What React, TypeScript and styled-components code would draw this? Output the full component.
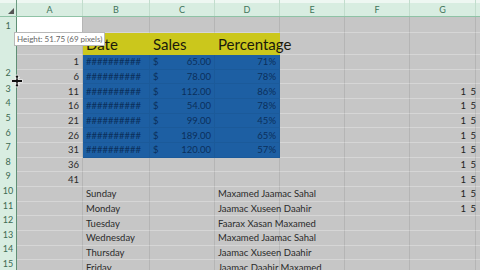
import styled, { createGlobalStyle } from "styled-components";

const GlobalStyle = createGlobalStyle`
  html, body {
    margin: 0;
    padding: 0;
    background: #c6c6c6;
    overflow: hidden;
  }
  body {
    font-family: Lato, "Liberation Sans", sans-serif;
  }
`;

const columns = [
  { key: "A", width: 66 },
  { key: "B", width: 67 },
  { key: "C", width: 65 },
  { key: "D", width: 65 },
  { key: "E", width: 65 },
  { key: "F", width: 65 },
  { key: "G", width: 66 },
  { key: "H", width: 40 },
];

type Fill = "gray" | "white" | "yellow" | "blue";

type DataRow = {
  a?: string;
  b?: string;
  c?: string;
  d?: string;
  g?: boolean;
  fill?: Fill;
};

const dataRows: DataRow[] = [
  { a: "1", b: "##########", c: "65.00", d: "71%", fill: "blue" },
  { a: "6", b: "##########", c: "78.00", d: "78%", fill: "blue" },
  { a: "11", b: "##########", c: "112.00", d: "86%", fill: "blue", g: true },
  { a: "16", b: "##########", c: "54.00", d: "78%", fill: "blue", g: true },
  { a: "21", b: "##########", c: "99.00", d: "45%", fill: "blue", g: true },
  { a: "26", b: "##########", c: "189.00", d: "65%", fill: "blue", g: true },
  { a: "31", b: "##########", c: "120.00", d: "57%", fill: "blue", g: true },
  { a: "36", g: true },
  { a: "41", g: true },
  { b: "Sunday", d: "Maxamed Jaamac Sahal", g: true },
  { b: "Monday", d: "Jaamac Xuseen Daahir", g: true },
  { b: "Tuesday", d: "Faarax Xasan Maxamed" },
  { b: "Wednesday", d: "Maxamed Jaamac Sahal" },
  { b: "Thursday", d: "Jaamac Xuseen Daahir" },
  { b: "Friday", d: "Jaamac Daahir Maxamed" },
];

const rowLabels = [
  { label: "1", height: 16 },
  { label: "2", height: 48 },
  ...Array.from({ length: 13 }, (_, i) => ({ label: String(i + 3), height: 14.6 })),
];

// gray cells stay transparent so text spilling out of a neighbour stays visible
const fills: Record<Fill, string> = {
  gray: "transparent",
  white: "#ffffff",
  yellow: "#cbc71c",
  blue: "#1d5fa3",
};

const lines: Record<Fill, string> = {
  gray: "#d6d6d6",
  white: "#9a9a9a",
  yellow: "#cbc71c",
  blue: "#1b5a9a",
};

function App() {
  const w = (i: number) => columns[i].width;

  return (
    <Sheet>
      <GlobalStyle />
      <ColumnHeader>
        <Corner>
          <CornerMark />
        </Corner>
        {columns.map((col) => (
          <ColumnLetter key={col.key} $width={col.width}>
            {col.key !== "H" && col.key}
          </ColumnLetter>
        ))}
      </ColumnHeader>

      <Body>
        <RowHeader>
          {rowLabels.map((row) => (
            <RowLabel key={row.label} $height={row.height} $bottom={row.label === "2"}>
              {row.label}
            </RowLabel>
          ))}
        </RowHeader>

        <Grid>
          <Row $height={16}>
            <Cell $width={w(0)} $fill="white" />
            {columns.slice(1).map((col) => (
              <Cell key={col.key} $width={col.width} />
            ))}
          </Row>

          <Row $height={22}>
            <Cell $width={w(0)} />
            <TitleCell $width={w(1)} $fill="yellow">Date</TitleCell>
            <TitleCell $width={w(2)} $fill="yellow">Sales</TitleCell>
            <TitleCell $width={w(3)} $fill="yellow">Percentage</TitleCell>
            {columns.slice(4).map((col) => (
              <Cell key={col.key} $width={col.width} />
            ))}
          </Row>

          {dataRows.map((row, i) => {
            const fill = row.fill ?? "gray";
            const onBlue = fill === "blue";
            return (
              <Row key={i} $height={14.67}>
                <Cell $width={w(0)} $align="flex-end">
                  {row.a}
                </Cell>
                <Cell $width={w(1)} $fill={fill} $dim={onBlue}>
                  {row.b}
                </Cell>
                <Cell $width={w(2)} $fill={fill} $dim={onBlue} $align="space-between">
                  {row.c && (
                    <>
                      <span>$</span>
                      <span>{row.c}</span>
                    </>
                  )}
                </Cell>
                <Cell $width={w(3)} $fill={fill} $dim={onBlue} $align={onBlue ? "flex-end" : "flex-start"}>
                  {row.d}
                </Cell>
                <Cell $width={w(4)} />
                <Cell $width={w(5)} />
                <Cell $width={w(6)} $align="flex-end">
                  {row.g && <Spill>1 5</Spill>}
                </Cell>
                <Cell $width={w(7)} />
              </Row>
            );
          })}
        </Grid>
      </Body>

      <Tooltip>Height: 51.75 (69 pixels)</Tooltip>
      <ResizeCursor viewBox="0 0 12 14" width="12" height="14">
        <path
          d="M6 0.5 L8.5 3.5 H7 V5.5 H11.5 V8.5 H7 V10.5 H8.5 L6 13.5 L3.5 10.5 H5 V8.5 H0.5 V5.5 H5 V3.5 H3.5 Z"
          fill="#111"
          stroke="#fff"
          strokeWidth="0.8"
        />
      </ResizeCursor>
    </Sheet>
  );
}

export default App;

const Sheet = styled.div`
  position: relative;
  width: 480px;
  height: 270px;
  overflow: hidden;
  background: #c6c6c6;
`;

const ColumnHeader = styled.div`
  display: flex;
  height: 17px;
  background: linear-gradient(#eef7f2 0, #eef7f2 3px, #d8ede1 3px);
  border-bottom: 1px solid #8fc3a6;
  box-sizing: border-box;
`;

const Corner = styled.div`
  flex: 0 0 17px;
  display: flex;
  align-items: flex-end;
  justify-content: flex-end;
  padding: 0 2px 2px 0;
  box-sizing: border-box;
  border-right: 1px solid #6d9c82;
`;

const CornerMark = styled.div`
  width: 0;
  height: 0;
  border-left: 6px solid transparent;
  border-bottom: 6px solid #555;
`;

const ColumnLetter = styled.div<{ $width: number }>`
  flex: 0 0 ${(p) => p.$width}px;
  display: flex;
  align-items: center;
  justify-content: center;
  padding-top: 3px;
  box-sizing: border-box;
  border-right: 1px solid #c2ddcd;
  font-size: 9px;
  color: #3f735a;
`;

const Body = styled.div`
  display: flex;
`;

const RowHeader = styled.div`
  flex: 0 0 17px;
  display: flex;
  flex-direction: column;
  background: #d8ede1;
  border-right: 1px solid #5f8f75;
  box-sizing: border-box;
`;

const RowLabel = styled.div<{ $height: number; $bottom?: boolean }>`
  height: ${(p) => p.$height}px;
  display: flex;
  align-items: ${(p) => (p.$bottom ? "flex-end" : "center")};
  justify-content: center;
  padding-bottom: ${(p) => (p.$bottom ? 3 : 0)}px;
  box-sizing: border-box;
  font-size: 9px;
  color: #3c6a52;
`;

const Grid = styled.div`
  display: flex;
  flex-direction: column;
`;

const Row = styled.div<{ $height: number }>`
  display: flex;
  height: ${(p) => p.$height}px;
  background: #c6c6c6;
`;

const Cell = styled.div<{
  $width: number;
  $fill?: Fill;
  $align?: string;
  $dim?: boolean;
}>`
  flex: 0 0 ${(p) => p.$width}px;
  min-width: 0;
  display: flex;
  align-items: center;
  justify-content: ${(p) => p.$align ?? "flex-start"};
  padding: 0 3px;
  box-sizing: border-box;
  background: ${(p) => fills[p.$fill ?? "gray"]};
  border-right: 1px solid ${(p) => (p.$fill === "blue" ? "#1b5a9a" : "#b5b5b5")};
  border-bottom: 1px solid ${(p) => lines[p.$fill ?? "gray"]};
  font-size: 9.5px;
  color: ${(p) => (p.$dim ? "#0b2f5c" : "#2a2a2a")};
  white-space: nowrap;
`;

const TitleCell = styled(Cell)`
  font-size: 15px;
  color: #1a1a0c;
  align-items: flex-end;
  padding-bottom: 1px;
  border-right-color: #cbc71c;
`;

const Spill = styled.span`
  margin-right: -5px;
  letter-spacing: 1px;
  color: #222;
`;

const Tooltip = styled.div`
  position: absolute;
  left: 14px;
  top: 32px;
  padding: 1px 2px;
  background: #fff;
  border: 1px solid #b8b8b8;
  font-size: 8px;
  color: #666;
  white-space: nowrap;
`;

const ResizeCursor = styled.svg`
  position: absolute;
  left: 11px;
  top: 74px;
`;
